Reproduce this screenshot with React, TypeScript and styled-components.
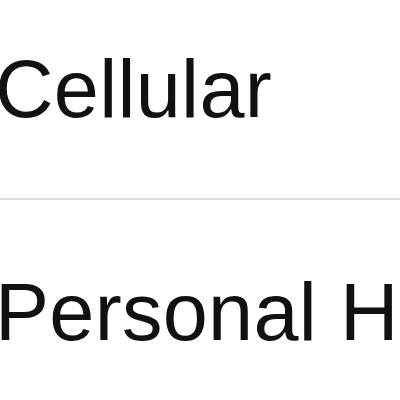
import * as React from 'react';
import styled, { createGlobalStyle } from 'styled-components';

const GlobalStyle = createGlobalStyle`
  html, body {
    margin: 0;
    padding: 0;
    background: #ffffff;
    overflow: hidden;
  }
  body {
    font-family: 'Liberation Sans', Arial, Helvetica, sans-serif;
  }
`;

const Screen = styled.div`
  width: 400px;
  height: 400px;
  overflow: hidden;
  background: #ffffff;
`;

const List = styled.ul`
  list-style: none;
  margin: -22px 0 0;
  padding: 0;
`;

const Row = styled.li<{ $divider?: boolean }>`
  height: 222px;
  display: flex;
  align-items: center;
  box-sizing: border-box;
  border-bottom: ${p => (p.$divider ? '2px solid #dedede' : 'none')};
  white-space: nowrap;
`;

const Label = styled.span`
  font-size: 81px;
  line-height: 1;
  color: #111111;
  letter-spacing: 0.3px;
  margin-left: -5px;
  margin-top: 2px;
`;

const items = ['Cellular', 'Personal Hotspot'];

const App: React.FC = () => (
  <Screen>
    <GlobalStyle />
    <List>
      {items.map((item, i) => (
        <Row key={item} $divider={i < items.length - 1}>
          <Label>{item}</Label>
        </Row>
      ))}
    </List>
  </Screen>
);

export default App;
